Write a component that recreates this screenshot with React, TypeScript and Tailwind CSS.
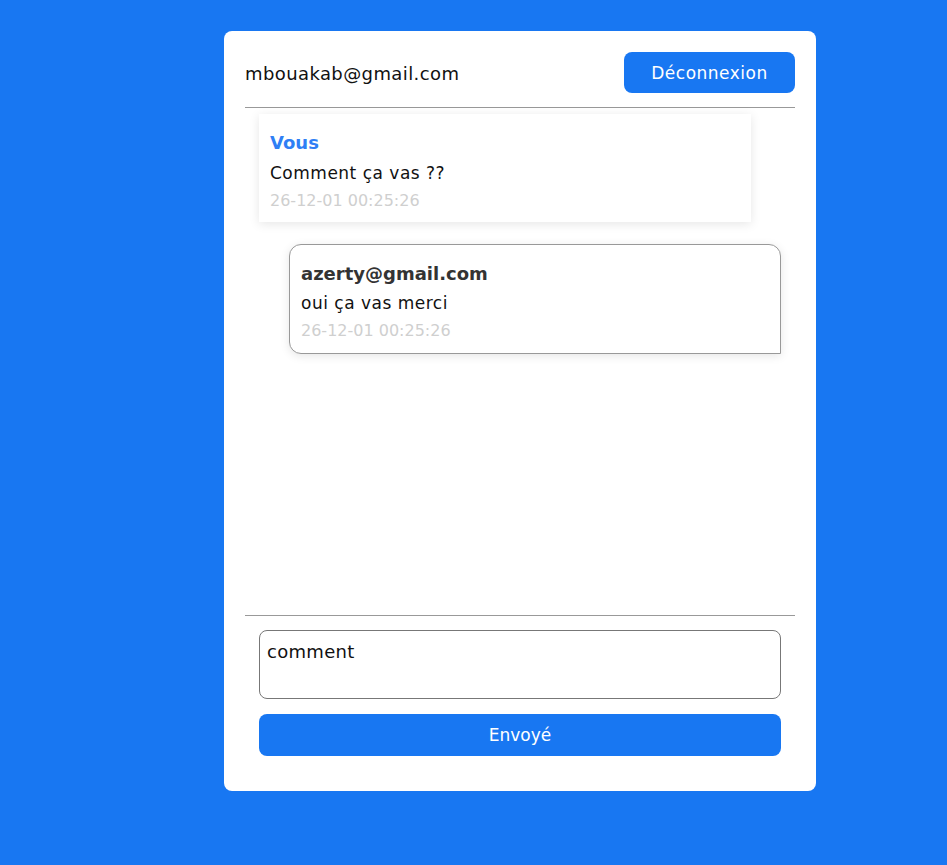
import React from "react";

const font = { fontFamily: "'DejaVu Sans', 'Noto Sans', sans-serif" };

export default function App() {
  return (
    <div className="min-h-[865px] w-full bg-[#1877f2] pt-[31px] pl-[224px]" style={font}>
      <div className="flex h-[760px] w-[592px] flex-col rounded-[8px] bg-white px-[21px] pt-[21px] pb-[35px]">
        <div className="flex h-[41px] items-center justify-between pt-[2px]">
          <span className="text-[18px] tracking-[0.4px] text-[#111]">mbouakab@gmail.com</span>
          <button className="-mt-[2px] h-[41px] w-[171px] rounded-[8px] bg-[#1877f2] pt-[2px] text-[17px] tracking-[0.5px] text-white">Déconnexion</button>
        </div>
        <div className="mt-[14px] h-px bg-[#999]" />
        <div className="flex flex-1 flex-col">
          <div className="mt-[6px] ml-[14px] flex h-[108px] w-[492px] flex-col bg-white px-[11px] pt-[17px] shadow-[0_2px_10px_rgba(0,0,0,0.1)]">
            <span className="text-[18px] leading-[24px] font-bold text-[#2f7ff5]">Vous</span>
            <span className="mt-[7px] text-[17px] leading-[22px] tracking-[0.5px] text-[#111]">Comment ça vas ??</span>
            <span className="mt-[6px] text-[16px] leading-[22px] text-[#cfcfcf]">26-12-01 00:25:26</span>
          </div>
          <div className="mt-[22px] ml-[44px] flex h-[110px] w-[492px] flex-col rounded-t-[12px] rounded-bl-[12px] border border-[#999] bg-white px-[11px] pt-[17px] shadow-[0_2px_10px_rgba(0,0,0,0.1)]">
            <span className="text-[18px] leading-[24px] font-bold text-[#333]">azerty@gmail.com</span>
            <span className="mt-[6px] text-[17px] leading-[22px] tracking-[0.5px] text-[#111]">oui ça vas merci</span>
            <span className="mt-[6px] text-[16px] leading-[22px] text-[#cfcfcf]">26-12-01 00:25:26</span>
          </div>
        </div>
        <div className="h-px bg-[#999]" />
        <div className="mt-[14px] mx-[14px] flex flex-col">
          <textarea
            defaultValue="comment"
            className="h-[69px] w-full resize-none rounded-[8px] border border-[#777] px-[7px] pt-[10px] text-[18px] leading-[22px] tracking-[0.3px] text-[#111] outline-none"
            style={font}
          />
          <button className="mt-[15px] h-[42px] w-full rounded-[8px] bg-[#1877f2] pt-[2px] text-[17px] text-white">Envoyé</button>
        </div>
      </div>
    </div>
  );
}
